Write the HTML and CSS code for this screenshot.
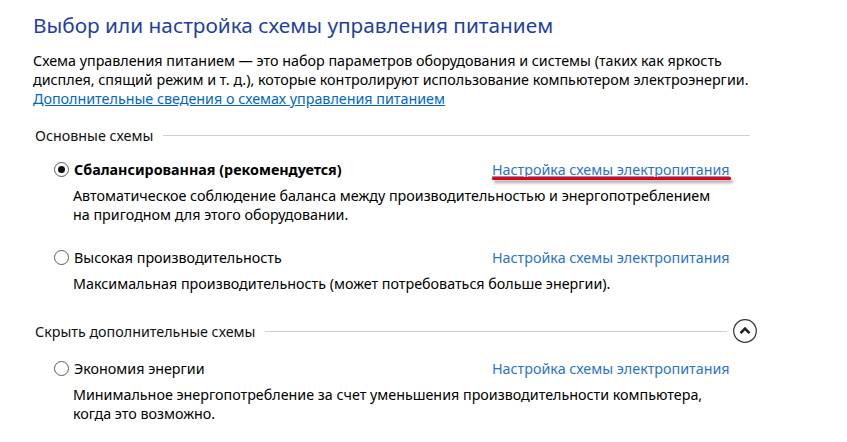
FILE: index.html
```html
<!DOCTYPE html>
<html lang="ru">
<head>
<meta charset="utf-8">
<link rel="stylesheet" href="styles.css">
</head>
<body>
<div class="page">
  <h1 class="title">Выбор или настройка схемы управления питанием</h1>
  <p class="intro">Схема управления питанием — это набор параметров оборудования и системы (таких как яркость<br>дисплея, спящий режим и т. д.), которые контролируют использование компьютером электроэнергии.<br><a class="link" href="#">Дополнительные сведения о схемах управления питанием</a></p>

  <div class="group-head"><span>Основные схемы</span><span class="rule"></span></div>

  <div class="plan first">
    <div class="plan-row">
      <span class="radio checked"></span>
      <span class="plan-name bold">Сбалансированная (рекомендуется)</span>
      <a class="plan-link marked" href="#">Настройка схемы электропитания</a>
    </div>
    <div class="plan-desc">Автоматическое соблюдение баланса между производительностью и энергопотреблением<br>на пригодном для этого оборудовании.</div>
  </div>

  <div class="plan">
    <div class="plan-row">
      <span class="radio"></span>
      <span class="plan-name">Высокая производительность</span>
      <a class="plan-link" href="#">Настройка схемы электропитания</a>
    </div>
    <div class="plan-desc">Максимальная производительность (может потребоваться больше энергии).</div>
  </div>

  <div class="group-head extra"><span>Скрыть дополнительные схемы</span><span class="rule short"></span>
    <span class="collapse"><svg width="24" height="24" viewBox="0 0 24 24"><circle cx="12" cy="12" r="11.3" fill="#fff" stroke="#333" stroke-width="1.2"/><path d="M7.5 14.2 L12 9.6 L16.5 14.2" fill="none" stroke="#222" stroke-width="2.6" stroke-linejoin="miter"/></svg></span>
  </div>

  <div class="plan third">
    <div class="plan-row">
      <span class="radio"></span>
      <span class="plan-name">Экономия энергии</span>
      <a class="plan-link" href="#">Настройка схемы электропитания</a>
    </div>
    <div class="plan-desc">Минимальное энергопотребление за счет уменьшения производительности компьютера,<br>когда это возможно.</div>
  </div>
</div>
</body>
</html>
```

FILE: styles.css
```css
html, body {
  margin: 0;
  padding: 0;
  background: #fff;
}
body {
  font-family: "Noto Sans", "Open Sans", sans-serif;
  font-size: 14.3px;
  color: #000;
}
.page {
  padding: 12px 0 0 33px;
  width: 717px;
}
.title {
  margin: 0;
  font-size: 20.8px;
  line-height: 26px;
  font-weight: normal;
  color: #1f3fa3;
  white-space: nowrap;
}
.intro {
  margin: 13px 0 0 0;
  line-height: 19px;
  white-space: nowrap;
}
.link {
  color: #0066cc;
  text-decoration: underline;
}
.group-head {
  display: flex;
  align-items: center;
  margin-top: 18px;
  padding-left: 2px;
  line-height: 19px;
  color: #111;
}
.rule {
  flex: 1;
  height: 1px;
  background: #cfcfcf;
  margin-left: 10px;
}
.plan {
  margin-top: 24px;
  padding-left: 21px;
}
.plan.first {
  margin-top: 15px;
}
.plan.third {
  margin-top: 16px;
}
.plan-row {
  display: flex;
  align-items: center;
  line-height: 19px;
  position: relative;
}
.radio {
  box-sizing: border-box;
  width: 15px;
  height: 15px;
  border: 1px solid #5a5a5a;
  border-radius: 50%;
  margin-right: 5px;
  display: inline-flex;
  align-items: center;
  justify-content: center;
  flex: none;
}
.radio.checked::before {
  content: "";
  width: 7px;
  height: 7px;
  border-radius: 50%;
  background: #111;
}
.plan-name {
  width: 418px;
  white-space: nowrap;
}
.bold {
  font-weight: bold;
}
.plan-link {
  color: #2a73cf;
  text-decoration: none;
  white-space: nowrap;
  position: relative;
}
.plan-link.marked {
  text-decoration: underline;
  text-decoration-color: #6aa0e0;
}
.plan-link.marked::after {
  content: "";
  position: absolute;
  left: 0;
  right: -1px;
  top: 17px;
  height: 3px;
  background: #e8000b;
  border-radius: 1px;
  box-shadow: 2px 3px 3px rgba(0, 0, 0, 0.35);
}
.plan-desc {
  margin-top: 7px;
  padding-left: 19px;
  line-height: 19px;
  white-space: nowrap;
}
.group-head.extra {
  margin-top: 26px;
  height: 24px;
  width: 722px;
}
.rule.short {
  margin-right: 6px;
}
.collapse {
  display: flex;
  width: 24px;
  height: 24px;
}
```
